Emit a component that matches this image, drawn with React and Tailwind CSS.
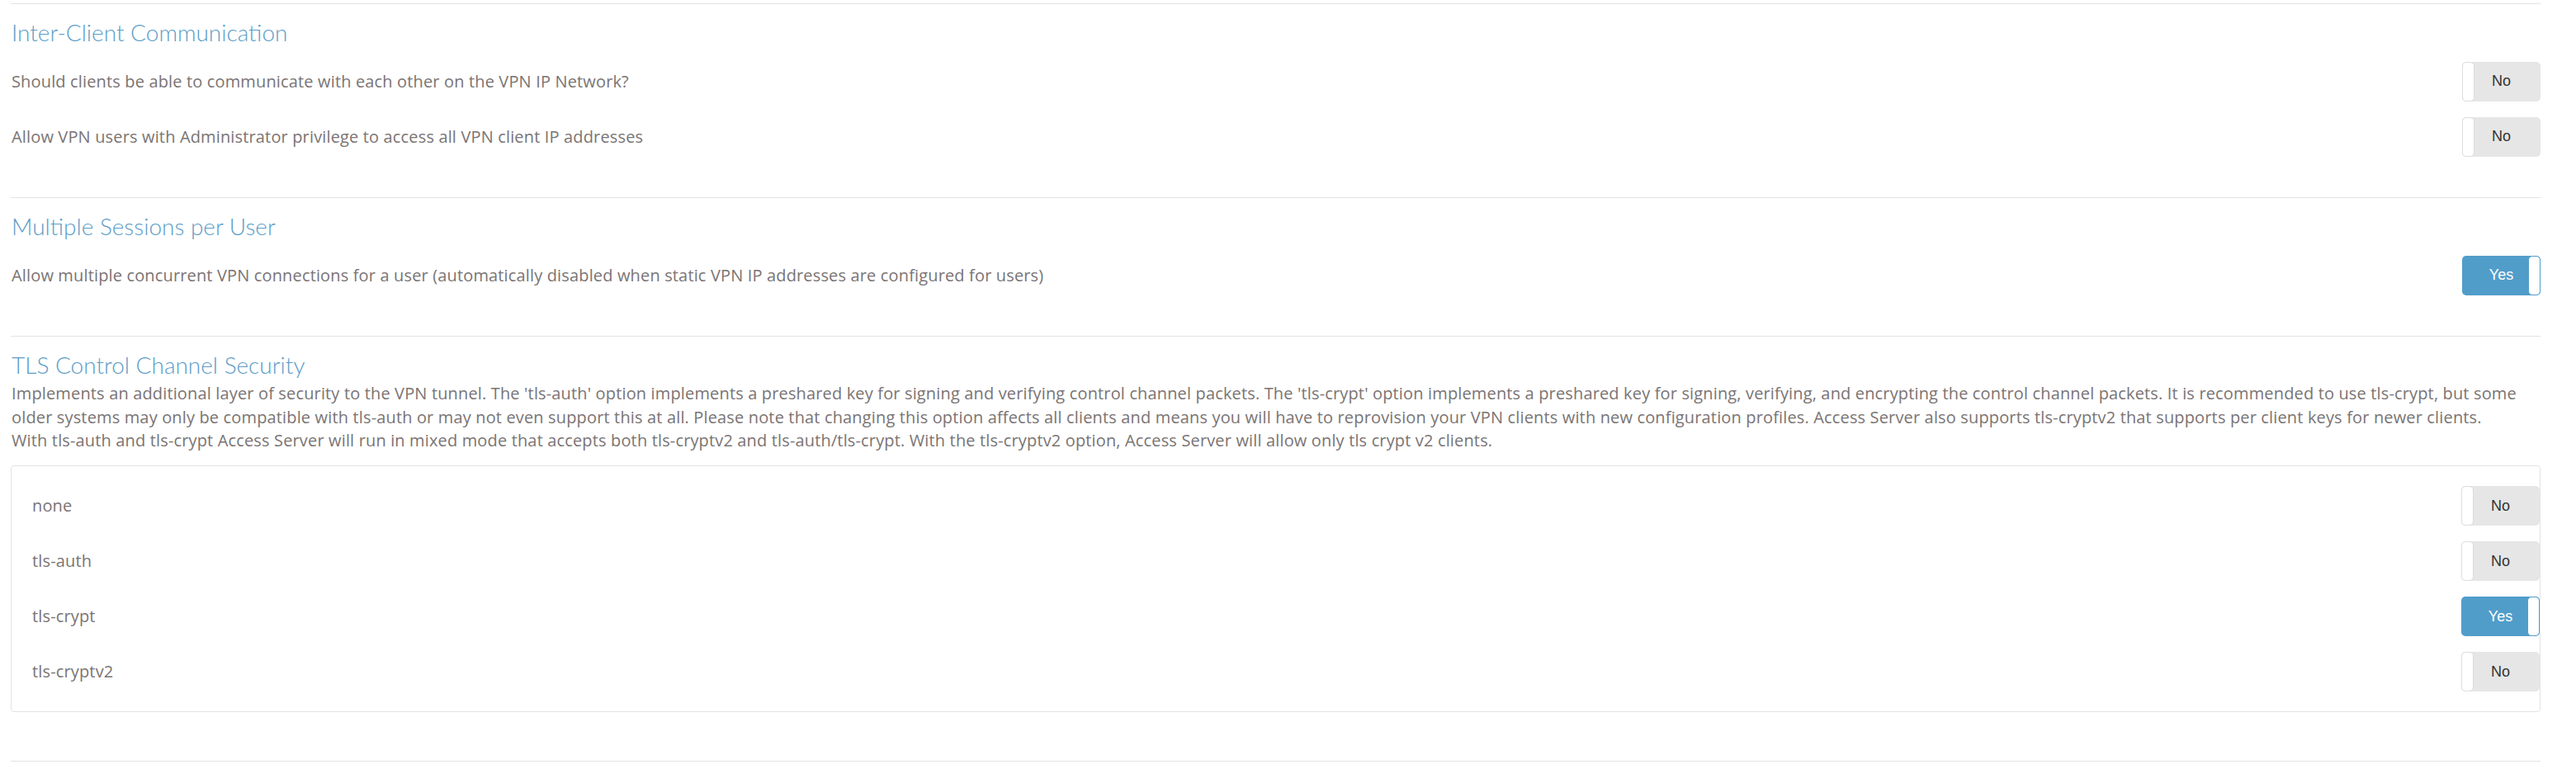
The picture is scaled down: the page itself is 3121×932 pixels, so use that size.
import React from "react";

const bodyFont = { fontFamily: '"Open Sans", "Noto Sans", sans-serif' };

// Yes/No switch as used by the admin UI
const Toggle = ({ on }) => (
  <div
    className={`relative w-[95px] h-[48px] rounded-[5px] flex items-center justify-center shrink-0 ${
      on ? "bg-[#519dca]" : "bg-[#e6e6e6]"
    }`}
    style={{ fontFamily: '"Liberation Sans", Arial, sans-serif' }}
  >
    <span className={`text-[18px] ${on ? "text-white" : "text-[#333333]"}`}>
      {on ? "Yes" : "No"}
    </span>
    <span
      className={`absolute top-0 h-full w-[15px] bg-white rounded-[5px] border ${
        on ? "right-0 border-[#519dca]" : "left-0 border-[#dddddd]"
      }`}
    />
  </div>
);

const Row = ({ label, on, inset }) => (
  <div className={`flex items-center justify-between h-[67px] ${inset ? "pl-[25px]" : "pl-px"}`}>
    <span className="text-[20px] tracking-[0.15px] text-[#7a7474]" style={bodyFont}>
      {label}
    </span>
    <Toggle on={on} />
  </div>
);

const Heading = ({ children, tight }) => (
  <h2
    className={`pl-px pt-[14px] text-[28px] leading-[40px] font-light text-[#5c9cc6] ${
      tight ? "pb-px" : "pb-[6px]"
    }`}
    style={{ fontFamily: 'Lato, "Open Sans", sans-serif' }}
  >
    {children}
  </h2>
);

export default function App() {
  return (
    <div className="bg-white w-[3121px] h-[932px] overflow-hidden pt-[4px]">
      <div className="ml-[13px] w-[3065px]">
        {/* Inter-Client Communication */}
        <section className="border-t border-[#e3e3e3] pb-[40px]">
          <Heading>Inter-Client Communication</Heading>
          <Row label="Should clients be able to communicate with each other on the VPN IP Network?" on={false} />
          <Row label="Allow VPN users with Administrator privilege to access all VPN client IP addresses" on={false} />
        </section>

        {/* Multiple Sessions per User */}
        <section className="border-t border-[#e3e3e3] pb-[40px]">
          <Heading>Multiple Sessions per User</Heading>
          <Row
            label="Allow multiple concurrent VPN connections for a user (automatically disabled when static VPN IP addresses are configured for users)"
            on={true}
          />
        </section>

        {/* TLS Control Channel Security */}
        <section className="border-t border-[#e3e3e3] pb-[59px]">
          <Heading tight>TLS Control Channel Security</Heading>
          <p
            className="pl-px text-[20px] tracking-[0.15px] leading-[28.5px] text-[#7a7474] whitespace-nowrap"
            style={bodyFont}
          >
            Implements an additional layer of security to the VPN tunnel. The 'tls-auth' option implements a preshared key for signing and verifying control channel packets. The 'tls-crypt' option implements a preshared key for signing, verifying, and encrypting the control channel packets. It is recommended to use tls-crypt, but some
            <br />
            older systems may only be compatible with tls-auth or may not even support this at all. Please note that changing this option affects all clients and means you will have to reprovision your VPN clients with new configuration profiles. Access Server also supports tls-cryptv2 that supports per client keys for newer clients.
            <br />
            With tls-auth and tls-crypt Access Server will run in mixed mode that accepts both tls-cryptv2 and tls-auth/tls-crypt. With the tls-cryptv2 option, Access Server will allow only tls crypt v2 clients.
          </p>

          <div className="mt-[15px] border border-[#e3e3e3] rounded-[4px] pt-[15px] pb-[14px]">
            <Row label="none" on={false} inset />
            <Row label="tls-auth" on={false} inset />
            <Row label="tls-crypt" on={true} inset />
            <Row label="tls-cryptv2" on={false} inset />
          </div>
        </section>

        <div className="border-t border-[#e3e3e3]" />
      </div>
    </div>
  );
}
